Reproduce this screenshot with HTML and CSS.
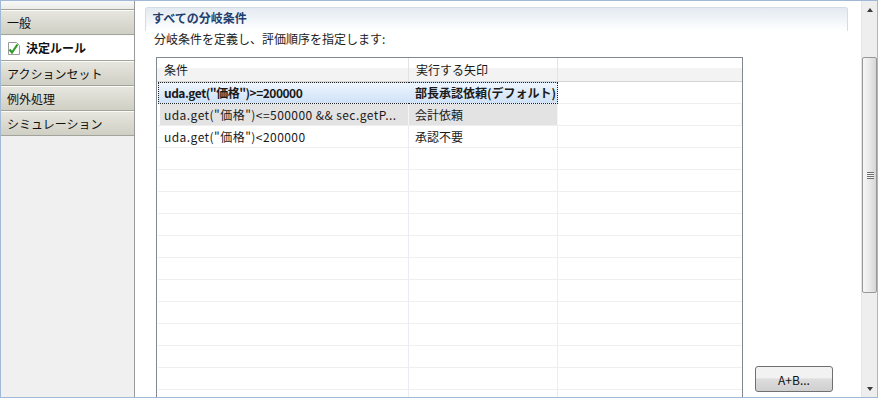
FILE: index.html
```html
<!DOCTYPE html>
<html lang="ja">
<head>
    <meta charset="UTF-8">
    <title>分岐条件</title>
    <link rel="stylesheet" href="styles.css">
</head>
<body>

    <div class="window">
        <!-- Left tabs -->
        <div class="sidebar">
            <div class="tab stub"></div>
            <div class="tab">一般</div>
            <div class="tab active">
                <svg class="check" width="14" height="15" viewBox="0 0 14 15">
                    <path d="M1.5 1.5h8l3 3v9h-11z" fill="#fff" stroke="#9a9a9a"/>
                    <path d="M2.5 8.5l2.5 3 5.5-8" fill="none" stroke="#2f9a2a" stroke-width="2.2"/>
                </svg>
                決定ルール
            </div>
            <div class="tab">アクションセット</div>
            <div class="tab">例外処理</div>
            <div class="tab">シミュレーション</div>
        </div>

        <!-- Main content -->
        <div class="main">
            <div class="section-head">すべての分岐条件</div>
            <div class="desc">分岐条件を定義し、評価順序を指定します:</div>

            <div class="body">
                <div class="table">
                    <div class="row head">
                        <div class="cell">条件</div>
                        <div class="cell">実行する矢印</div>
                        <div class="cell"></div>
                    </div>
                    <div class="row selected">
                        <div class="cell">uda.get("価格")&gt;=200000</div>
                        <div class="cell">部長承認依頼(デフォルト)</div>
                        <div class="cell"></div>
                    </div>
                    <div class="row gray">
                        <div class="cell">uda.get("価格")&lt;=500000 &amp;&amp; sec.getP...</div>
                        <div class="cell">会計依頼</div>
                        <div class="cell"></div>
                    </div>
                    <div class="row">
                        <div class="cell">uda.get("価格")&lt;200000</div>
                        <div class="cell">承認不要</div>
                        <div class="cell"></div>
                    </div>
                    <div class="row"><div class="cell"></div><div class="cell"></div><div class="cell"></div></div>
                    <div class="row"><div class="cell"></div><div class="cell"></div><div class="cell"></div></div>
                    <div class="row"><div class="cell"></div><div class="cell"></div><div class="cell"></div></div>
                    <div class="row"><div class="cell"></div><div class="cell"></div><div class="cell"></div></div>
                    <div class="row"><div class="cell"></div><div class="cell"></div><div class="cell"></div></div>
                    <div class="row"><div class="cell"></div><div class="cell"></div><div class="cell"></div></div>
                    <div class="row"><div class="cell"></div><div class="cell"></div><div class="cell"></div></div>
                    <div class="row"><div class="cell"></div><div class="cell"></div><div class="cell"></div></div>
                    <div class="row"><div class="cell"></div><div class="cell"></div><div class="cell"></div></div>
                    <div class="row"><div class="cell"></div><div class="cell"></div><div class="cell"></div></div>
                    <div class="row"><div class="cell"></div><div class="cell"></div><div class="cell"></div></div>
                    <div class="row"><div class="cell"></div><div class="cell"></div><div class="cell"></div></div>
                </div>

                <div class="actions">
                    <button type="button">A+B...</button>
                </div>
            </div>
        </div>

        <!-- Vertical scrollbar -->
        <div class="scrollbar">
            <div class="arrow up"></div>
            <div class="track">
                <div class="thumb"><span class="grip"></span></div>
            </div>
            <div class="arrow down"></div>
        </div>
    </div>

</body>
</html>
```

FILE: styles.css
```css
body {
    margin: 0;
    padding: 0;
    font-family: "Noto Sans CJK JP", "Noto Sans", sans-serif;
    font-size: 12px;
    color: #1a1a1a;
}

.window {
    width: 878px;
    height: 398px;
    box-sizing: border-box;
    border: 1px solid #9fb9d6;
    display: flex;
    overflow: hidden;
    background-color: #fff;
}

/* Left tabs */
.sidebar {
    width: 133px;
    flex-shrink: 0;
    background-color: #f0f0f0;
    border-right: 1px solid #9a9a9a;
}

.tab {
    height: 23px;
    line-height: 23px;
    padding-left: 6px;
    border-top: 1px solid #fbfbf8;
    border-bottom: 1px solid #a3a39e;
    background: linear-gradient(#e6e6df, #d0cfc4);
    color: #111;
    white-space: nowrap;
}

.tab.stub {
    height: 8px;
    border-top: none;
    background: linear-gradient(#f8f8f8, #ebebe8);
}

.tab.active {
    height: 24px;
    line-height: 24px;
    background: #fff;
    font-weight: bold;
    display: flex;
    align-items: center;
    gap: 5px;
}

.check {
    flex-shrink: 0;
}

/* Main content */
.main {
    flex: 1;
    min-width: 0;
    display: flex;
    flex-direction: column;
    overflow: hidden;
}

.section-head {
    margin: 6px 13px 0 10px;
    height: 23px;
    line-height: 20px;
    padding-left: 6px;
    border: 1px solid #d4dde7;
    border-bottom: none;
    border-radius: 3px 3px 0 0;
    background: linear-gradient(#e3eaf1, #ffffff);
    color: #1d3f70;
    font-weight: bold;
}

.desc {
    height: 16px;
    line-height: 16px;
    padding-left: 19px;
    color: #222;
}

.body {
    flex: 1;
    min-height: 0;
    display: flex;
    margin-top: 10px;
    padding-left: 21px;
}

.table {
    width: 585px;
    flex-shrink: 0;
    border: 1px solid #828790;
    border-bottom: none;
    overflow: hidden;
}

.row {
    display: grid;
    grid-template-columns: 251px 149px 1fr;
    height: 22px;
    margin-left: 1px;
}

.cell {
    box-sizing: border-box;
    padding-left: 6px;
    line-height: 21px;
    border-bottom: 1px solid #efefef;
    border-right: 1px solid #e9edf3;
    white-space: nowrap;
    overflow: hidden;
}

.row .cell:first-child {
    letter-spacing: 0.45px;
}

.cell:last-child {
    border-right: none;
}

.row.head {
    height: 24px;
    margin-left: 0;
    grid-template-columns: 252px 149px 1fr;
}

.row.head .cell {
    line-height: 23px;
    padding-left: 7px;
    letter-spacing: 0;
    border-bottom: 1px solid #d5d5d5;
    border-right: 1px solid #e3e3e3;
    background: linear-gradient(#ffffff 0 42%, #f3f3f3 42%);
}

.row.head .cell:last-child {
    border-right: none;
}

.row.selected .cell {
    font-weight: bold;
    border-top: 1px dotted #222;
    border-bottom: 1px dotted #222;
    border-right: none;
    line-height: 19px;
    background: linear-gradient(#eef5fd, #cfe2f8);
}

.row.selected .cell:first-child {
    letter-spacing: -0.5px;
    border-left: 1px dotted #222;
    padding-left: 5px;
}

.row.selected .cell:nth-child(2) {
    border-right: 1px dotted #222;
}

.row.selected .cell:last-child {
    background: #fff;
    border: none;
    border-bottom: 1px solid #efefef;
}

.row.gray .cell {
    background-color: #e3e3e3;
    border-right: 1px solid #f4f4f4;
}

.row.gray .cell:first-child {
    box-shadow: inset 2px 0 0 #fff;
}

.row.gray .cell:last-child {
    background-color: #fff;
}

.actions {
    flex: 1;
    display: flex;
    align-items: flex-end;
    padding-left: 12px;
    padding-bottom: 5px;
}

button {
    width: 78px;
    height: 26px;
    padding: 0;
    border: 1px solid #707070;
    border-radius: 3px;
    background: linear-gradient(#f2f2f2 0 45%, #dddddd 50%, #cfcfcf);
    font-family: "Noto Sans CJK JP", "Noto Sans", sans-serif;
    font-size: 12px;
    color: #111;
}

/* Scrollbar */
.scrollbar {
    width: 16px;
    flex-shrink: 0;
    display: flex;
    flex-direction: column;
    background-color: #eeeeee;
    border-left: 1px solid #e4e4e4;
    box-sizing: border-box;
}

.arrow {
    height: 17px;
    display: flex;
    align-items: center;
    justify-content: center;
}

.arrow::before {
    content: "";
    border-left: 3px solid transparent;
    border-right: 3px solid transparent;
}

.arrow.up::before {
    border-bottom: 4px solid #3c3c3c;
}

.arrow.down::before {
    border-top: 4px solid #3c3c3c;
}

.track {
    flex: 1;
}

.thumb {
    margin-top: 39px;
    height: 236px;
    box-sizing: border-box;
    border: 1px solid #979797;
    border-radius: 2px;
    background: linear-gradient(to right, #f6f6f6, #e9e9e9 50%, #d6d6d6);
    display: flex;
    align-items: center;
    justify-content: center;
}

.grip {
    width: 7px;
    height: 7px;
    background: repeating-linear-gradient(#6e6e6e 0 1px, #f4f4f4 1px 2px);
    border-left: 1px solid #f4f4f4;
}
```
